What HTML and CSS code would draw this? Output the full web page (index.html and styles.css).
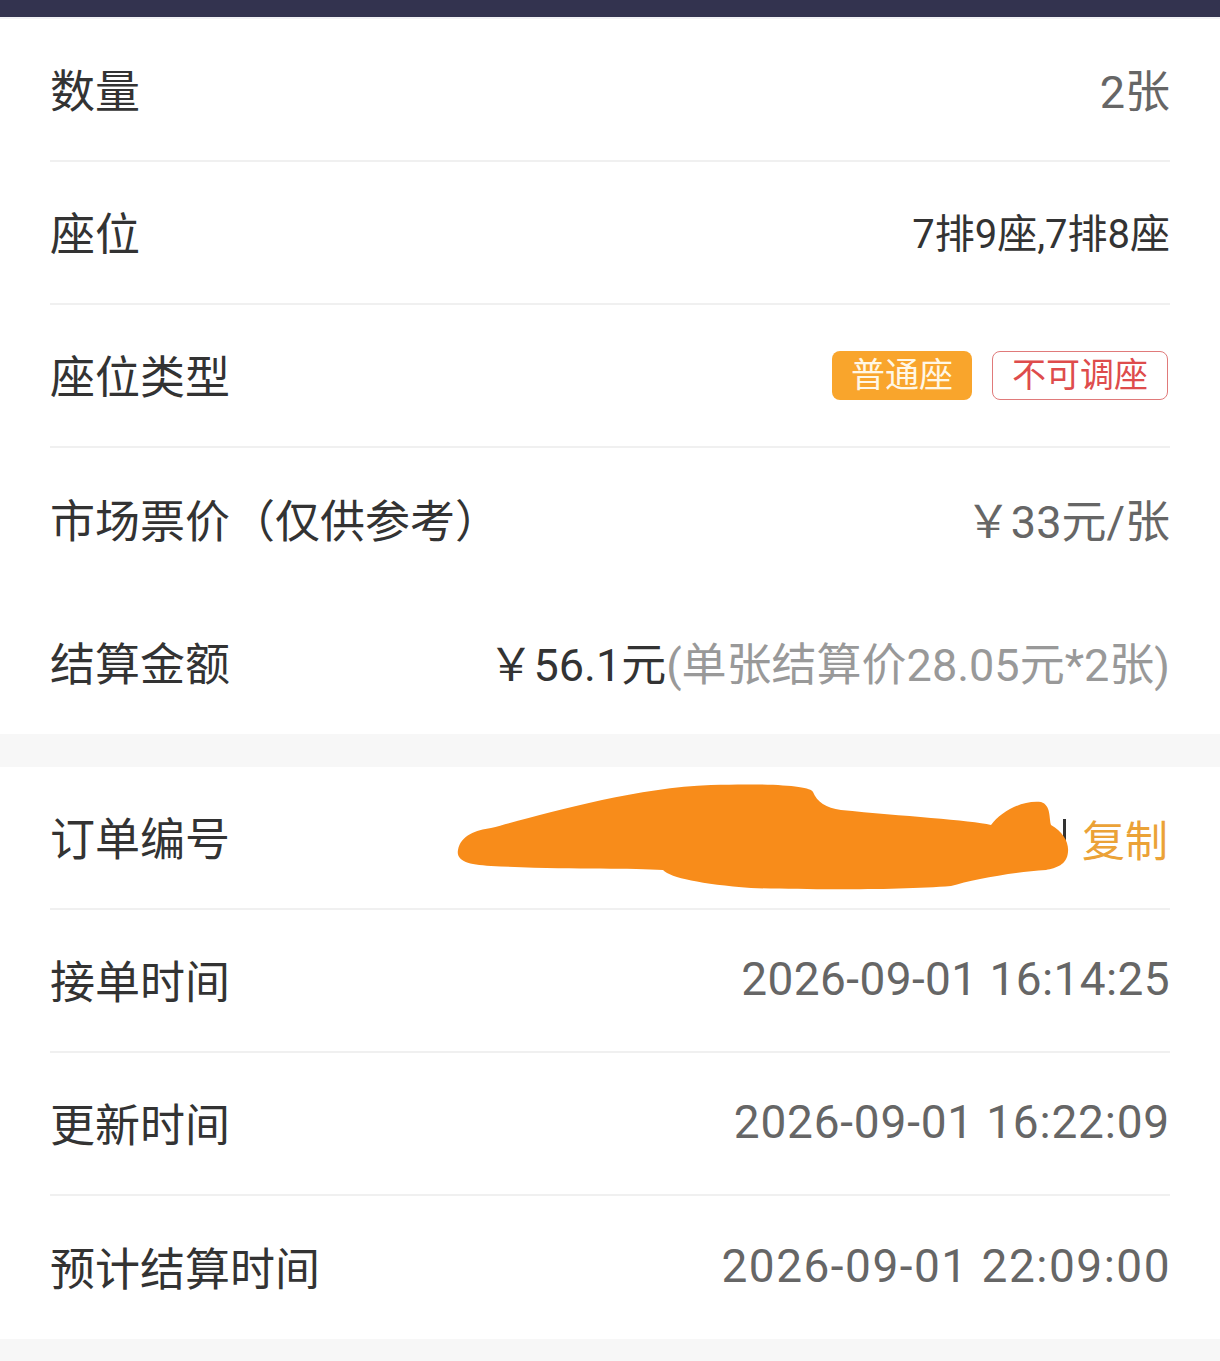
FILE: index.html
```html
<!DOCTYPE html>
<html lang="zh-CN">
<head>
    <meta charset="UTF-8">
    <meta name="viewport" content="width=device-width, initial-scale=1.0">
    <title>订单详情</title>
    <link rel="stylesheet" href="styles.css">
</head>
<body>
    <div class="top-bar"></div>

    <div class="card first">
        <div class="row">
            <span class="label">数量</span>
            <span class="value count">2张</span>
        </div>
        <div class="row">
            <span class="label">座位</span>
            <span class="value dark">7排9座,7排8座</span>
        </div>
        <div class="row">
            <span class="label">座位类型</span>
            <span class="tags">
                <span class="tag tag-fill">普通座</span>
                <span class="tag tag-line">不可调座</span>
            </span>
        </div>
        <div class="row no-line">
            <span class="label">市场票价（仅供参考）</span>
            <span class="value price">￥33元/张</span>
        </div>
        <div class="row no-line">
            <span class="label">结算金额</span>
            <span class="value price dark">￥56.1元<span class="muted">(单张结算价28.05元*2张)</span></span>
        </div>
    </div>

    <div class="card">
        <div class="row">
            <span class="label">订单编号</span>
            <span class="order">
                <svg class="blot" width="620" height="115" viewBox="0 0 620 115">
                    <path d="M7,70 C10,55 25,50 40,48 C90,35 180,8 260,5 C320,3 360,6 362,12 C366,22 375,28 390,30 C450,36 520,40 540,45 C550,32 570,20 590,22 C600,25 598,38 600,45 C612,52 618,62 617,72 C616,85 605,88 595,90 C560,92 520,100 500,106 C450,110 360,110 300,108 C250,104 220,98 212,90 C180,88 120,90 40,86 C15,85 5,80 7,70 Z" fill="#f88c1a"/>
                </svg>
                <span class="cursor"></span>
                <span class="copy">复制</span>
            </span>
        </div>
        <div class="row">
            <span class="label">接单时间</span>
            <span class="value time">2026-09-01 16:14:25</span>
        </div>
        <div class="row">
            <span class="label">更新时间</span>
            <span class="value time wide">2026-09-01 16:22:09</span>
        </div>
        <div class="row no-line">
            <span class="label">预计结算时间</span>
            <span class="value time wider">2026-09-01 22:09:00</span>
        </div>
    </div>
</body>
</html>
```

FILE: styles.css
```css
body {
    margin: 0;
    background-color: #f7f7f7;
    font-family: 'Roboto', 'Noto Sans CJK SC', sans-serif;
    color: #333;
}

.top-bar {
    height: 17px;
    background-color: #33334f;
}

.card {
    background: #fff;
    padding: 0 50px;
    margin-bottom: 33px;
}

.card.first {
    border-top: 2px solid #f2f2f6;
}

.row {
    height: 143px;
    box-sizing: border-box;
    display: flex;
    align-items: center;
    justify-content: space-between;
    border-bottom: 2px solid #f0f0f0;
}

.row.no-line {
    border-bottom: none;
}

.label {
    font-size: 45px;
    color: #333;
    margin-top: -3px;
}

.value {
    font-size: 40px;
    color: #666;
    white-space: nowrap;
    margin-top: -3px;
}

.value.count {
    font-size: 45px;
}

.value.dark {
    color: #333;
}

.value.price {
    font-size: 45px;
}

.value.time {
    font-size: 46px;
    color: #666;
    letter-spacing: 0.4px;
}

.value.time.wide {
    letter-spacing: 0.8px;
}

.value.time.wider {
    letter-spacing: 1.5px;
    margin-right: -1px;
}

.muted {
    color: #999;
}

.tags {
    display: flex;
    gap: 20px;
    margin-right: 2px;
}

.tag {
    font-size: 34px;
    height: 49px;
    line-height: 49px;
    padding: 0 19px;
    border-radius: 8px;
    box-sizing: border-box;
}

.tag-fill {
    background-color: #f9a52c;
    color: #fff7e6;
}

.tag-line {
    border: 1.5px solid #e07a7a;
    color: #de4c4c;
    line-height: 46px;
}

.order {
    display: flex;
    align-items: center;
    margin-right: 2px;
}

.blot {
    display: block;
    margin-right: -8px;
    position: relative;
    z-index: 1;
}

.cursor {
    width: 3px;
    height: 38px;
    background-color: #333;
    margin-right: 16px;
}

.copy {
    font-size: 43px;
    color: #eba237;
}
```
